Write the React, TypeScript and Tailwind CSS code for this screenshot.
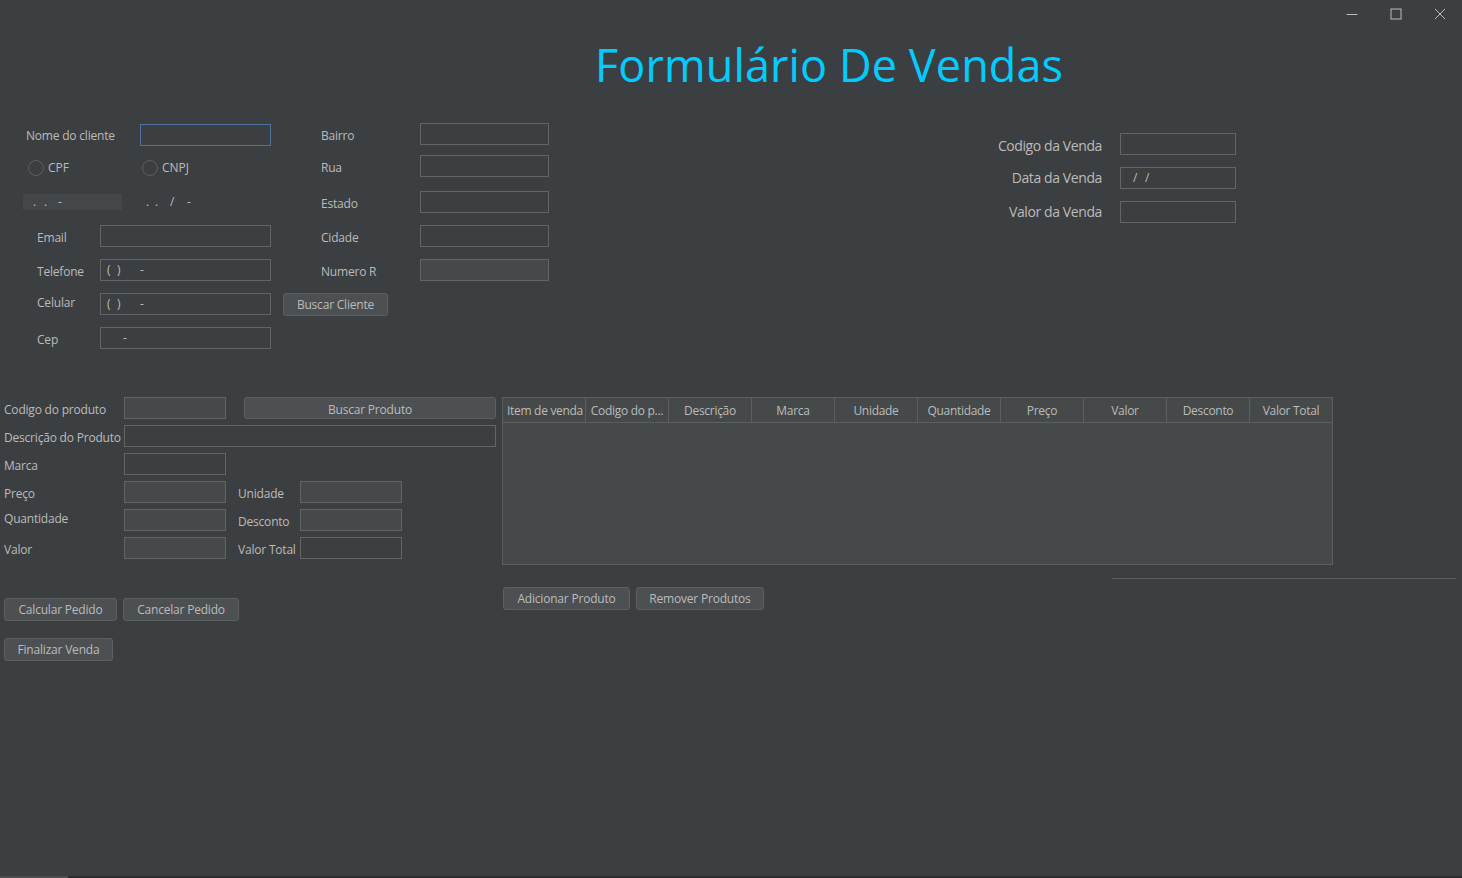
import type { ReactNode } from "react";

// Swing-style dark form (FlatLaf Darcula look)

function Field({ w, fill = false, focus = false, children }: { w: string; fill?: boolean; focus?: boolean; children?: ReactNode }) {
  return (
    <div
      className={`${w} h-[22px] shrink-0 border flex items-center pl-[6px] whitespace-pre text-[12px] text-[#bbbbbb] ${
        focus ? "border-[#4b74a0]" : "border-[#646464]"
      } ${fill ? "bg-[#45494a]" : "bg-[#3c3f41]"}`}
    >
      {children}
    </div>
  );
}

function Btn({ w, children }: { w: string; children: ReactNode }) {
  return (
    <div className={`${w} h-[23px] shrink-0 rounded-[3px] border border-[#5e6060] bg-[#4c5052] flex items-center justify-center whitespace-nowrap text-[12px] tracking-[-0.2px] text-[#bbbbbb]`}>
      {children}
    </div>
  );
}

function Radio({ label }: { label: string }) {
  return (
    <div className="flex items-center gap-[4px]">
      <div className="w-[16px] h-[16px] rounded-full border border-[#5e6060] bg-[#3c3f41]" />
      <span className="text-[12px] text-[#bbbbbb]">{label}</span>
    </div>
  );
}

// mask characters placed at fixed advances, like a JFormattedTextField placeholder
function Mask({ parts }: { parts: [string, number][] }) {
  return (
    <div className="flex text-[12px] leading-[16px]">
      {parts.map(([ch, w], i) => (
        <span key={i} className="inline-block" style={{ width: w }}>
          {ch}
        </span>
      ))}
    </div>
  );
}

const columns = ["Item de venda", "Codigo do p...", "Descrição", "Marca", "Unidade", "Quantidade", "Preço", "Valor", "Desconto", "Valor Total"];

const label = "h-[22px] whitespace-nowrap text-[12px] tracking-[-0.2px]";

export default function App() {
  return (
    <div className="w-[1462px] h-[878px] bg-[#3c3f41] flex flex-col overflow-hidden text-[#bbbbbb]" style={{ fontFamily: "'Open Sans', 'Noto Sans', sans-serif" }}>
      {/* window controls */}
      <div className="h-[30px] flex justify-end shrink-0">
        <div className="w-[44px] h-[27px] flex items-center justify-center">
          <svg width="12" height="12" viewBox="0 0 12 12"><path d="M0.5 6.5h11" stroke="#bbbbbb" strokeWidth="1" /></svg>
        </div>
        <div className="w-[44px] h-[27px] flex items-center justify-center">
          <svg width="12" height="12" viewBox="0 0 12 12"><rect x="1" y="1" width="10" height="10" fill="none" stroke="#bbbbbb" strokeWidth="1" /></svg>
        </div>
        <div className="w-[44px] h-[27px] flex items-center justify-center">
          <svg width="12" height="12" viewBox="0 0 12 12"><path d="M1 1l10 10M11 1L1 11" stroke="#bbbbbb" strokeWidth="1" /></svg>
        </div>
      </div>

      {/* title */}
      <div className="h-[93px] shrink-0 pl-[595px]">
        <h1 className="text-[45px] leading-[1] tracking-[0.1px] whitespace-nowrap text-[#00ccff] mt-[12px]">Formulário De Vendas</h1>
      </div>

      {/* client section */}
      <div className="h-[274px] shrink-0 flex">
        {/* left column */}
        <div className="w-[271px] flex flex-col pt-[1px]">
          <div className="flex items-center">
            <span className={`w-[114px] pl-[26px] box-content ${label} leading-[24px]`}>Nome do cliente</span>
            <Field w="w-[131px]" focus />
          </div>
          <div className="flex mt-[13px] h-[17px] items-center">
            <div className="w-[114px] ml-[28px]"><Radio label="CPF" /></div>
            <Radio label="CNPJ" />
          </div>
          <div className="flex mt-[18px] h-[16px] items-center">
            <div className="ml-[23px] w-[99px] h-[16px] bg-[#43474a] pl-[10px]">
              <Mask parts={[[".", 11], [".", 14], ["-", 8]]} />
            </div>
            <div className="ml-[24px]">
              <Mask parts={[[".", 9], [".", 15], ["/", 17], ["-", 8]]} />
            </div>
          </div>
          <div className="flex items-center mt-[15px]">
            <span className={`w-[63px] ml-[37px] ${label} leading-[26px]`}>Email</span>
            <Field w="w-[171px]" />
          </div>
          <div className="flex items-center mt-[12px]">
            <span className={`w-[63px] ml-[37px] ${label} leading-[26px]`}>Telefone</span>
            <Field w="w-[171px]">
              <Mask parts={[["(", 10], [")", 23], ["-", 8]]} />
            </Field>
          </div>
          <div className="flex items-center mt-[12px]">
            <span className={`w-[63px] ml-[37px] ${label} leading-[19px]`}>Celular</span>
            <Field w="w-[171px]">
              <Mask parts={[["(", 10], [")", 23], ["-", 8]]} />
            </Field>
          </div>
          <div className="flex items-center mt-[12px]">
            <span className={`w-[63px] ml-[37px] ${label} leading-[25px]`}>Cep</span>
            <Field w="w-[171px]">
              <Mask parts={[["", 16], ["-", 8]]} />
            </Field>
          </div>
        </div>

        {/* middle column */}
        <div className="w-[266px] ml-[12px] flex flex-col">
          {[
            ["Bairro", 0, false],
            ["Rua", 10, false],
            ["Estado", 14, false],
            ["Cidade", 12, false],
            ["Numero R", 12, true],
          ].map(([name, mt, fill]) => (
            <div key={name as string} className="flex items-center" style={{ marginTop: mt as number }}>
              <span className={`w-[99px] pl-[38px] box-content ${label} leading-[26px]`}>{name as string}</span>
              <Field w="w-[129px]" fill={fill as boolean} />
            </div>
          ))}
          <div className="mt-[12px]">
            <Btn w="w-[105px]">Buscar Cliente</Btn>
          </div>
        </div>

        {/* right column */}
        <div className="ml-[449px] flex flex-col pt-[10px] gap-[12px]">
          {[
            ["Codigo da Venda", null, "leading-[26px]"],
            ["Data da Venda", "date", "leading-[22px]"],
            ["Valor da Venda", null, "leading-[22px]"],
          ].map(([name, mask, lh]) => (
            <div key={name} className="flex items-center">
              <span className={`w-[122px] h-[22px] pr-[18px] box-content text-right whitespace-nowrap text-[14px] tracking-[-0.4px] -ml-[18px] ${lh}`}>{name}</span>
              <Field w="w-[116px]">
                {mask && <div className="pl-[6px]"><Mask parts={[["/", 12], ["/", 8]]} /></div>}
              </Field>
            </div>
          ))}
        </div>
      </div>

      {/* product section */}
      <div className="flex shrink-0">
        <div className="w-[496px] flex flex-col">
          <div className="flex flex-col gap-[6px]">
            <div className="flex items-center">
              <span className={`w-[120px] pl-[4px] box-content ${label} leading-[25px]`}>Codigo do produto</span>
              <Field w="w-[102px]" fill />
              <div className="ml-[18px] w-[252px] h-[22px] rounded-[3px] border border-[#5e6060] bg-[#4c5052] flex items-center justify-center text-[12px] tracking-[-0.2px] pt-[4px]">Buscar Produto</div>
            </div>
            <div className="flex items-center">
              <span className={`w-[120px] pl-[4px] box-content ${label} leading-[25px]`}>Descrição do Produto</span>
              <Field w="w-[372px]" />
            </div>
            <div className="flex items-center">
              <span className={`w-[120px] pl-[4px] box-content ${label} leading-[25px]`}>Marca</span>
              <Field w="w-[102px]" />
            </div>
            <div className="flex items-center">
              <span className={`w-[120px] pl-[4px] box-content ${label} leading-[25px]`}>Preço</span>
              <Field w="w-[102px]" fill />
              <span className={`w-[62px] ml-[12px] ${label} leading-[25px]`}>Unidade</span>
              <Field w="w-[102px]" fill />
            </div>
            <div className="flex items-center">
              <span className={`w-[120px] pl-[4px] box-content ${label} leading-[19px]`}>Quantidade</span>
              <Field w="w-[102px]" fill />
              <span className={`w-[62px] ml-[12px] ${label} leading-[25px]`}>Desconto</span>
              <Field w="w-[102px]" fill />
            </div>
            <div className="flex items-center">
              <span className={`w-[120px] pl-[4px] box-content ${label} leading-[25px]`}>Valor</span>
              <Field w="w-[102px]" fill />
              <span className={`w-[62px] ml-[12px] ${label} leading-[25px]`}>Valor Total</span>
              <Field w="w-[102px]" />
            </div>
          </div>
          <div className="flex gap-[6px] ml-[4px] mt-[39px]">
            <Btn w="w-[113px]">Calcular Pedido</Btn>
            <Btn w="w-[116px]">Cancelar Pedido</Btn>
          </div>
          <div className="ml-[4px] mt-[17px]">
            <Btn w="w-[109px]">Finalizar Venda</Btn>
          </div>
        </div>

        <div className="ml-[6px] flex flex-col">
          <div className="w-[831px] h-[168px] border border-[#5c5f61] bg-[#45494a] flex flex-col">
            <div className="h-[25px] border-b border-[#5c5f61] grid grid-cols-[repeat(9,83px)_82px]">
              {columns.map((c, i) => (
                <div
                  key={c}
                  className={`flex items-center whitespace-nowrap overflow-hidden text-[12px] tracking-[-0.3px] leading-[27px] ${i < 9 ? "border-r border-[#5c5f61]" : ""} ${i === 0 ? "pl-[4px]" : "justify-center"}`}
                >
                  {c}
                </div>
              ))}
            </div>
          </div>
          <div className="ml-[610px] mt-[13px] w-[344px] h-px bg-[#5a5d5f]" />
          <div className="flex gap-[6px] ml-[1px] mt-[8px]">
            <Btn w="w-[127px]">Adicionar Produto</Btn>
            <Btn w="w-[128px]">Remover Produtos</Btn>
          </div>
        </div>
      </div>

      {/* bottom edge */}
      <div className="mt-auto h-[2px] flex shrink-0">
        <div className="w-[68px] bg-[#4c4f52]" />
        <div className="flex-1 bg-[#2b2d2f]" />
      </div>
    </div>
  );
}
